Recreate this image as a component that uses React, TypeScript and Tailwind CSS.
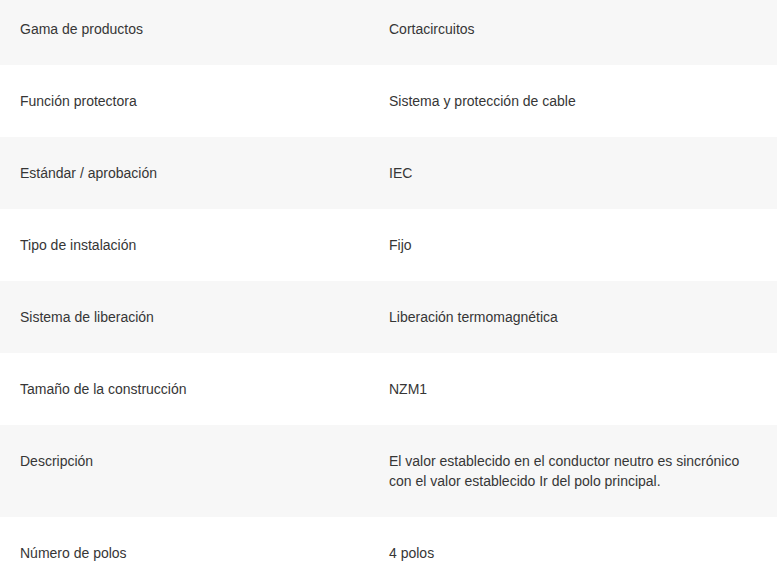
import React from "react";

const rows: [string, string][] = [
  ["Gama de productos", "Cortacircuitos"],
  ["Función protectora", "Sistema y protección de cable"],
  ["Estándar / aprobación", "IEC"],
  ["Tipo de instalación", "Fijo"],
  ["Sistema de liberación", "Liberación termomagnética"],
  ["Tamaño de la construcción", "NZM1"],
  [
    "Descripción",
    "El valor establecido en el conductor neutro es sincrónico con el valor establecido Ir del polo principal.",
  ],
  ["Número de polos", "4 polos"],
];

export default function App() {
  return (
    <div
      className="w-[779px] h-[573px] overflow-hidden bg-white text-[14px] leading-[20px] text-[#363636]"
      style={{ fontFamily: '"Liberation Sans", Arial, sans-serif' }}
    >
      <div className="-mt-[7px] w-[777px]">
        {rows.map(([k, v], i) => (
          <div
            key={k}
            className={
              i % 2 === 0
                ? "grid grid-cols-[389px_1fr] py-[26px] bg-[#f7f7f7]"
                : "grid grid-cols-[389px_1fr] py-[26px] bg-white"
            }
          >
            <div className="pl-5 pr-5">{k}</div>
            <div className="pr-3">{v}</div>
          </div>
        ))}
      </div>
    </div>
  );
}
